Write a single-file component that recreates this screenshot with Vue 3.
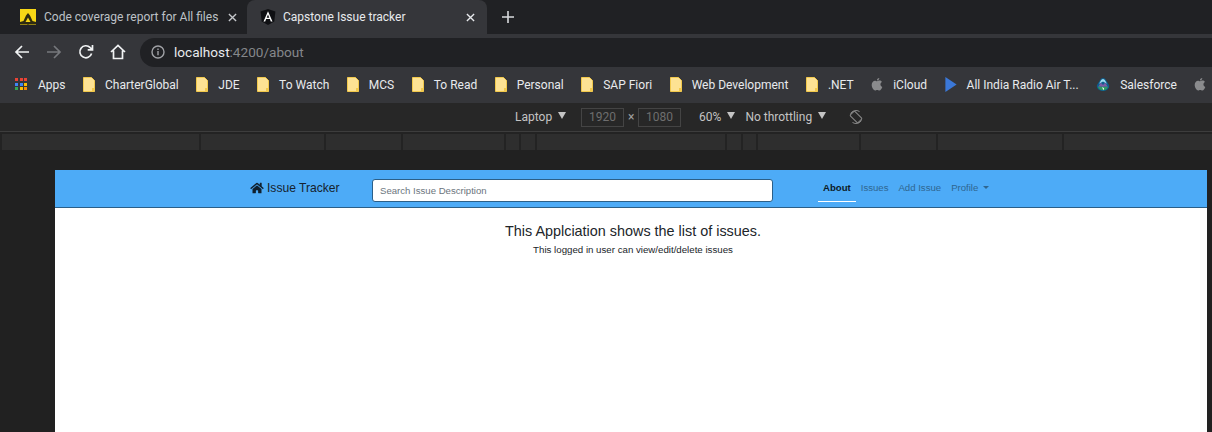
<script setup>
const bookmarks = [
  { label: 'CharterGlobal', icon: 'folder' },
  { label: 'JDE', icon: 'folder' },
  { label: 'To Watch', icon: 'folder' },
  { label: 'MCS', icon: 'folder' },
  { label: 'To Read', icon: 'folder' },
  { label: 'Personal', icon: 'folder' },
  { label: 'SAP Fiori', icon: 'folder' },
  { label: 'Web Development', icon: 'folder' },
  { label: '.NET', icon: 'folder' },
  { label: 'iCloud', icon: 'apple' },
  { label: 'All India Radio Air T...', icon: 'play' },
  { label: 'Salesforce', icon: 'cloud' },
  { label: '', icon: 'apple' },
]
const appColors = ['#ea4335', '#ea4335', '#ea4335', '#4285f4', '#4285f4', '#fbbc05', '#34a853', '#fbbc05', '#fb8c00']
const rulerCells = [197, 123, 75, 101, 13, 14, 188, 14, 13, 101, 75, 124, 148]
const navLinks = ['About', 'Issues', 'Add Issue']
</script>

<template>
  <div class="screen">
    <div class="tabstrip">
      <div class="tab">
        <svg class="favicon" viewBox="0 0 16 16">
          <rect width="16" height="16" fill="#f7d716" />
          <path d="M0 15.500V13l3.500-1L6 6.500 8 4l2 2.500 2.500 5.500 3.500 1v2.500z" fill="#2e2b10" />
          <path d="M5.500 13L8 8.500l2.500 4.500z" fill="#f7d716" />
          <path d="M7 13h2v2.500H7z" fill="#2e2b10" />
        </svg>
        <span class="tab-title">Code coverage report for All files</span>
        <svg class="tab-close" viewBox="0 0 10 10"><path d="M1 1l8 8M9 1l-8 8" /></svg>
      </div>
      <div class="tab active">
        <svg class="favicon" viewBox="0 0 16 16">
          <path d="M8 0l7.400 2.600-1.100 9.800L8 16l-6.300-3.600L.6 2.600z" fill="#0f1013" />
          <path d="M8 2.200L3.500 12.400h1.700l.9-2.300h3.800l.9 2.300h1.700zm-1.300 6.500L8 5.600l1.300 3.100z" fill="#fff" />
        </svg>
        <span class="tab-title">Capstone Issue tracker</span>
        <svg class="tab-close" viewBox="0 0 10 10"><path d="M1 1l8 8M9 1l-8 8" /></svg>
      </div>
      <svg class="new-tab" viewBox="0 0 12 12"><path d="M6 0v12M0 6h12" /></svg>
    </div>

    <div class="toolbar">
      <svg class="nav-icon" viewBox="0 0 16 16"><path d="M15 8H2M8 2L2 8l6 6" /></svg>
      <svg class="nav-icon off" viewBox="0 0 16 16"><path d="M1 8h13M8 2l6 6-6 6" /></svg>
      <svg class="nav-icon" viewBox="0 0 16 16"><path d="M13.600 9.500A6 6 0 1 1 12.200 3.600L14 5.400M14.500 1v4.800H9.700" /></svg>
      <svg class="nav-icon" viewBox="0 0 16 16"><path d="M1 8l7-6.500L15 8M3.500 6.500v8h9v-8" /></svg>
      <div class="omnibox">
        <svg class="info" viewBox="0 0 14 14">
          <circle cx="7" cy="7" r="6" />
          <path d="M7 6v4.200M7 3.600v1.300" />
        </svg>
        <span class="host">localhost</span><span class="path">:4200/about</span>
      </div>
    </div>

    <div class="bookmarks">
      <div class="bookmark apps">
        <span class="apps-grid"><i v-for="(c, i) in appColors" :key="i" :style="{ background: c }"></i></span>
        <span>Apps</span>
      </div>
      <div v-for="b in bookmarks" :key="b.label" class="bookmark">
        <svg v-if="b.icon === 'folder'" class="bm-icon" viewBox="0 0 12 15">
          <path d="M.5.5h8l3 3v11H.5z" fill="#fde293" stroke="#f2c94c" />
          <path d="M9 11h2.500v3.500H9z" fill="#f2c94c" />
        </svg>
        <svg v-else-if="b.icon === 'apple'" class="bm-icon" viewBox="0 0 12 15">
          <path d="M8.300 1C8.300 2.400 7.200 3.600 5.900 3.500 5.800 2.200 7 1 8.300 1zM6 4.300c.6 0 1.400-.7 2.500-.7 1 0 1.900.5 2.400 1.300-2.100 1.200-1.800 4.100.4 5-.5 1.400-1.700 3.600-3 3.600-.8 0-1.100-.5-2.100-.5s-1.400.5-2.100.5C2.900 13.500.7 10.600.7 8 .7 5.400 2.300 3.700 4 3.700c.8 0 1.500.6 2 .6z" fill="#8a8b8d" />
        </svg>
        <svg v-else-if="b.icon === 'play'" class="bm-icon play" viewBox="0 0 12 16">
          <path d="M0 0l12 8-12 8z" fill="#3b78d8" />
        </svg>
        <svg v-else class="bm-icon cloud" viewBox="0 0 16 16">
          <path d="M8 .5c1.500 0 2.500 1 3.500 2.500l3 5c1 2 .5 3.500-1 5.500-1.500 1.500-3.500 2-5.500 2s-4-.5-5.500-2c-1.500-2-2-3.500-1-5.500l3-5C5.500 1.500 6.500.5 8 .5z" fill="#0d5f8f" />
          <path d="M8 1.800c1 0 1.800.8 2.600 2l1.900 3.400-2-1.200L8 4.500 5.500 6l-2 1.200 1.900-3.400c.8-1.200 1.600-2 2.600-2z" fill="#9fdcf0" />
          <path d="M2.500 10.500L5.500 6 8 8.500 10.500 6l3 4.500z" fill="#7b5aa6" />
          <path d="M2.200 10.500h11.600c-.5 2-2.800 4-5.800 4s-5.300-2-5.800-4z" fill="#2e9b62" />
          <path d="M7.200 10.500l2 2-.8 2-.8-2z" fill="#fff" />
        </svg>
        <span v-if="b.label">{{ b.label }}</span>
      </div>
    </div>

    <div class="device-bar">
      <span class="device-item">Laptop <i class="tri"></i></span>
      <span class="dim">1920</span>
      <span class="times">×</span>
      <span class="dim">1080</span>
      <span class="device-item zoom">60% <i class="tri"></i></span>
      <span class="device-item">No throttling <i class="tri"></i></span>
      <svg class="rotate" viewBox="0 0 14 14">
        <rect x="3.800" y="1.500" width="6.400" height="11" rx="1" transform="rotate(-45 7 7)" />
        <path d="M1.500 3.500A6.500 6.500 0 0 1 10.500 1.500M12.500 10.500A6.500 6.500 0 0 1 3.500 12.500" />
      </svg>
    </div>

    <div class="media-bar">
      <span v-for="(w, i) in rulerCells" :key="i" class="cell" :style="{ width: w + 'px' }"></span>
    </div>

    <div class="canvas">
      <div class="page">
        <nav class="navbar">
          <a class="brand">
            <svg class="home" viewBox="0 0 576 512">
              <path d="M280.400 148.300L96 300.100V464a16 16 0 0 0 16 16l112.100-.3a16 16 0 0 0 15.900-16V368a16 16 0 0 1 16-16h64a16 16 0 0 1 16 16v95.600a16 16 0 0 0 16 16.100L464 480a16 16 0 0 0 16-16V300L295.700 148.300a12.200 12.200 0 0 0-15.300 0zM571.600 251.500L488 182.600V44.100a12 12 0 0 0-12-12h-56a12 12 0 0 0-12 12v72.600L318.500 43a48 48 0 0 0-61 0L4.300 251.500a12 12 0 0 0-1.600 16.900l25.500 31A12 12 0 0 0 45.200 301l235.200-193.700a12.200 12.200 0 0 1 15.300 0L530.900 301a12 12 0 0 0 16.900-1.600l25.500-31a12 12 0 0 0-1.700-16.900z" />
            </svg>
            <span>Issue Tracker</span>
          </a>
          <input class="search" type="text" placeholder="Search Issue Description" />
          <ul class="links">
            <li v-for="(l, i) in navLinks" :key="l" :class="{ current: i === 0 }">{{ l }}</li>
            <li class="profile">Profile <i class="caret"></i></li>
          </ul>
        </nav>
        <div class="content">
          <h1>This Applciation shows the list of issues.</h1>
          <p>This logged in user can view/edit/delete issues</p>
        </div>
      </div>
    </div>
  </div>
</template>

<style>
html, body {
  margin: 0;
  background: #212121;
  overflow: hidden;
}
</style>

<style scoped>
.screen {
  width: 1212px;
  height: 432px;
  overflow: hidden;
  display: flex;
  flex-direction: column;
  font-family: Roboto, "Open Sans", sans-serif;
  background: #212121;
}

.tabstrip {
  height: 34px;
  flex: none;
  display: flex;
  align-items: flex-end;
  background: #202124;
  box-sizing: border-box;
}

.tab {
  width: 247px;
  height: 34px;
  display: flex;
  align-items: center;
  box-sizing: border-box;
  padding: 0 0 0 20px;
  color: #bdc1c6;
  font-size: 12px;
}

.tab.active {
  width: 240px;
  padding-left: 13px;
  border-radius: 8px 8px 0 0;
  background: #35363a;
  color: #e8eaed;
}

.favicon {
  width: 16px;
  height: 16px;
  flex: none;
  margin-right: 8px;
}

.tab.active .favicon {
  margin-right: 7px;
}

.tab-title {
  flex: 1;
  white-space: nowrap;
  overflow: hidden;
}

.tab-close {
  width: 9px;
  height: 9px;
  flex: none;
  margin-right: 10px;
  fill: none;
  stroke: #c6c8cc;
  stroke-width: 1.500;
}

.tab.active .tab-close {
  margin-right: 12px;
  stroke: #e8eaed;
}

.new-tab {
  width: 12px;
  height: 12px;
  margin: 0 0 11px 15px;
  fill: none;
  stroke: #d8dadd;
  stroke-width: 1.600;
}

.toolbar {
  height: 36px;
  flex: none;
  display: flex;
  align-items: center;
  padding-left: 14px;
  background: #35363a;
}

.nav-icon {
  width: 16px;
  height: 16px;
  flex: none;
  margin-right: 16px;
  fill: none;
  stroke: #f1f3f4;
  stroke-width: 1.700;
}

.nav-icon.off {
  stroke: #76787c;
}

.omnibox {
  flex: 1;
  height: 29px;
  margin-left: -2px;
  display: flex;
  align-items: center;
  padding-left: 11px;
  border-radius: 15px 0 0 15px;
  background: #202124;
  font-size: 13.600px;
}

.info {
  width: 14px;
  height: 14px;
  margin-right: 9px;
  fill: none;
  stroke: #a0a2a6;
  stroke-width: 1.400;
}

.host {
  color: #e8eaed;
}

.path {
  color: #85878b;
}

.bookmarks {
  height: 33px;
  flex: none;
  display: flex;
  align-items: center;
  box-sizing: border-box;
  padding: 0 0 4px 15px;
  background: #35363a;
  color: #e8eaed;
  font-size: 12px;
  white-space: nowrap;
}

.bookmark {
  display: flex;
  align-items: center;
  margin-right: 17.500px;
}

.apps-grid {
  width: 12px;
  height: 13px;
  display: grid;
  grid-template-columns: repeat(3, 3px);
  grid-auto-rows: 3px;
  gap: 1.500px;
  margin-right: 11px;
}

.apps-grid i {
  display: block;
}

.bm-icon {
  width: 12px;
  height: 15px;
  flex: none;
  margin-right: 10px;
}

.bm-icon.cloud {
  width: 14px;
  height: 15px;
}

.device-bar {
  height: 29px;
  flex: none;
  display: flex;
  align-items: center;
  padding: 0 0 0 515px;
  background: #272727;
  color: #c4c4c4;
  font-size: 12px;
  box-sizing: border-box;
  border-bottom: 1px solid #3d3d3d;
}

.device-item {
  white-space: nowrap;
}

.zoom {
  margin: 0 10px 0 18px;
}

.tri {
  display: inline-block;
  width: 0;
  height: 0;
  margin-left: 3px;
  vertical-align: 2px;
  border-left: 4px solid transparent;
  border-right: 4px solid transparent;
  border-top: 7px solid #c4c4c4;
}

.dim {
  width: 43px;
  height: 19px;
  box-sizing: border-box;
  display: flex;
  align-items: center;
  justify-content: center;
  border: 1px solid #444;
  color: #6e6e6e;
}

.device-item:first-child + .dim {
  margin-left: 15px;
}

.times {
  width: 14px;
  text-align: center;
  color: #a0a0a0;
}

.rotate {
  width: 14px;
  height: 14px;
  margin-left: 23px;
  fill: none;
  stroke: #8a8a8a;
  stroke-width: 1;
}

.media-bar {
  height: 18px;
  flex: none;
  display: flex;
  gap: 2px;
  padding: 2px 0 0 2px;
  box-sizing: border-box;
  background: #232323;
}

.cell {
  height: 16px;
  flex: none;
  background: #2e2e2e;
}

.canvas {
  flex: 1;
  padding: 20px 5px 0 55px;
  background: #212121;
}

.page {
  height: 100%;
  background: #fff;
  font-family: "Liberation Sans", Arial, sans-serif;
  color: #212529;
}

.navbar {
  height: 38px;
  box-sizing: border-box;
  display: flex;
  align-items: center;
  padding-left: 195px;
  background: #4dabf7;
  border-bottom: 1px solid #2b5f88;
}

.brand {
  width: 122px;
  flex: none;
  display: flex;
  align-items: center;
  margin-top: -2px;
  color: #16222e;
  font-size: 12.100px;
}

.home {
  width: 14px;
  height: 12px;
  margin-right: 3px;
  fill: #10202e;
}

.search {
  width: 401px;
  height: 23px;
  flex: none;
  box-sizing: border-box;
  margin-top: 3px;
  padding: 0 7px;
  border: 1px solid #2b5f88;
  border-radius: 3px;
  background: #fff;
  font: 9.600px "Liberation Sans", Arial, sans-serif;
  outline: none;
}

.search::placeholder {
  color: #6c757d;
  opacity: 1;
}

.links {
  display: flex;
  align-self: flex-start;
  margin: 5px 0 0 45px;
  padding: 0;
  list-style: none;
  font-size: 9.600px;
  color: #2f6690;
}

.links li {
  height: 27px;
  box-sizing: border-box;
  padding: 7px 5px 0;
  white-space: nowrap;
}

.links li.current {
  font-weight: 700;
  color: #0c1a26;
  border-bottom: 1px solid #fff;
}

.caret {
  display: inline-block;
  width: 0;
  height: 0;
  margin-left: 2px;
  vertical-align: 2px;
  border-left: 3px solid transparent;
  border-right: 3px solid transparent;
  border-top: 3px solid #2f6690;
}

.content {
  text-align: center;
  padding: 14px 0 0 4px;
}

.content h1 {
  margin: 0;
  font-size: 14.400px;
  font-weight: 400;
  line-height: 18px;
}

.content p {
  margin: 3px 0 0;
  font-size: 9.700px;
  line-height: 14px;
}
</style>
